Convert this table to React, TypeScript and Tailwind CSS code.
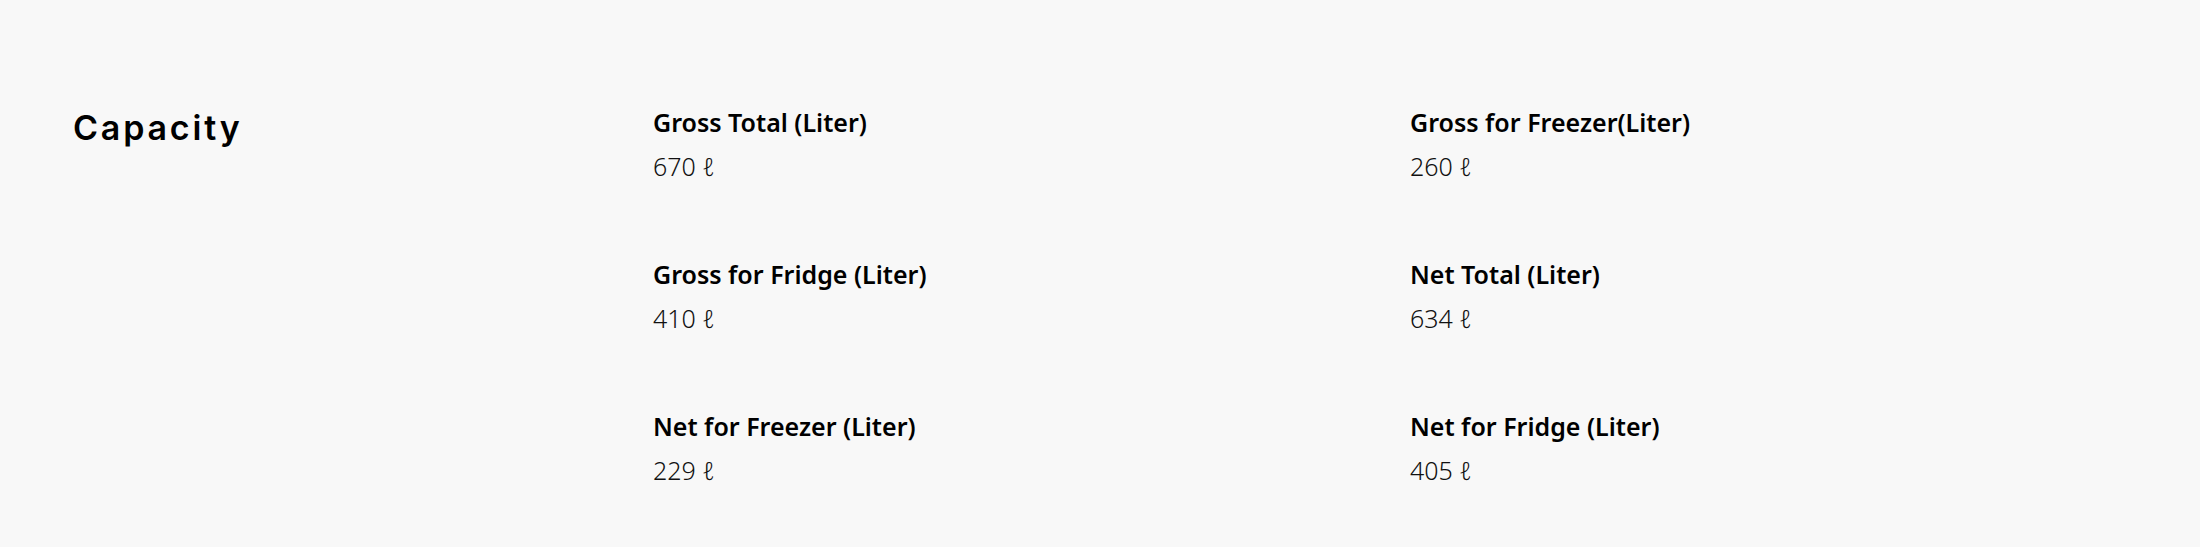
const specs = [
  { label: "Gross Total (Liter)", value: "670 ℓ" },
  { label: "Gross for Freezer(Liter)", value: "260 ℓ" },
  { label: "Gross for Fridge (Liter)", value: "410 ℓ" },
  { label: "Net Total (Liter)", value: "634 ℓ" },
  { label: "Net for Freezer (Liter)", value: "229 ℓ" },
  { label: "Net for Fridge (Liter)", value: "405 ℓ" },
];

export default function App() {
  return (
    <div className="w-full h-[547px] bg-[#f8f8f8] flex items-start pl-[73px] pt-[100px]">
      <div className="w-[580px] shrink-0 pt-[6px]">
        <h2 className="text-[34px] leading-[44px] font-semibold text-black font-['Inter',sans-serif] tracking-[2.8px]">
          Capacity
        </h2>
      </div>
      <div className="grid grid-cols-[757px_757px] content-start gap-y-[64px]">
        {specs.map((s) => (
          <div key={s.label} className="font-['Noto_Sans',sans-serif]">
            <div className="text-[25px] leading-[44px] font-semibold text-black">
              {s.label}
            </div>
            <div className="text-[25px] leading-[44px] font-light text-[#111]">
              {s.value}
            </div>
          </div>
        ))}
      </div>
    </div>
  );
}
